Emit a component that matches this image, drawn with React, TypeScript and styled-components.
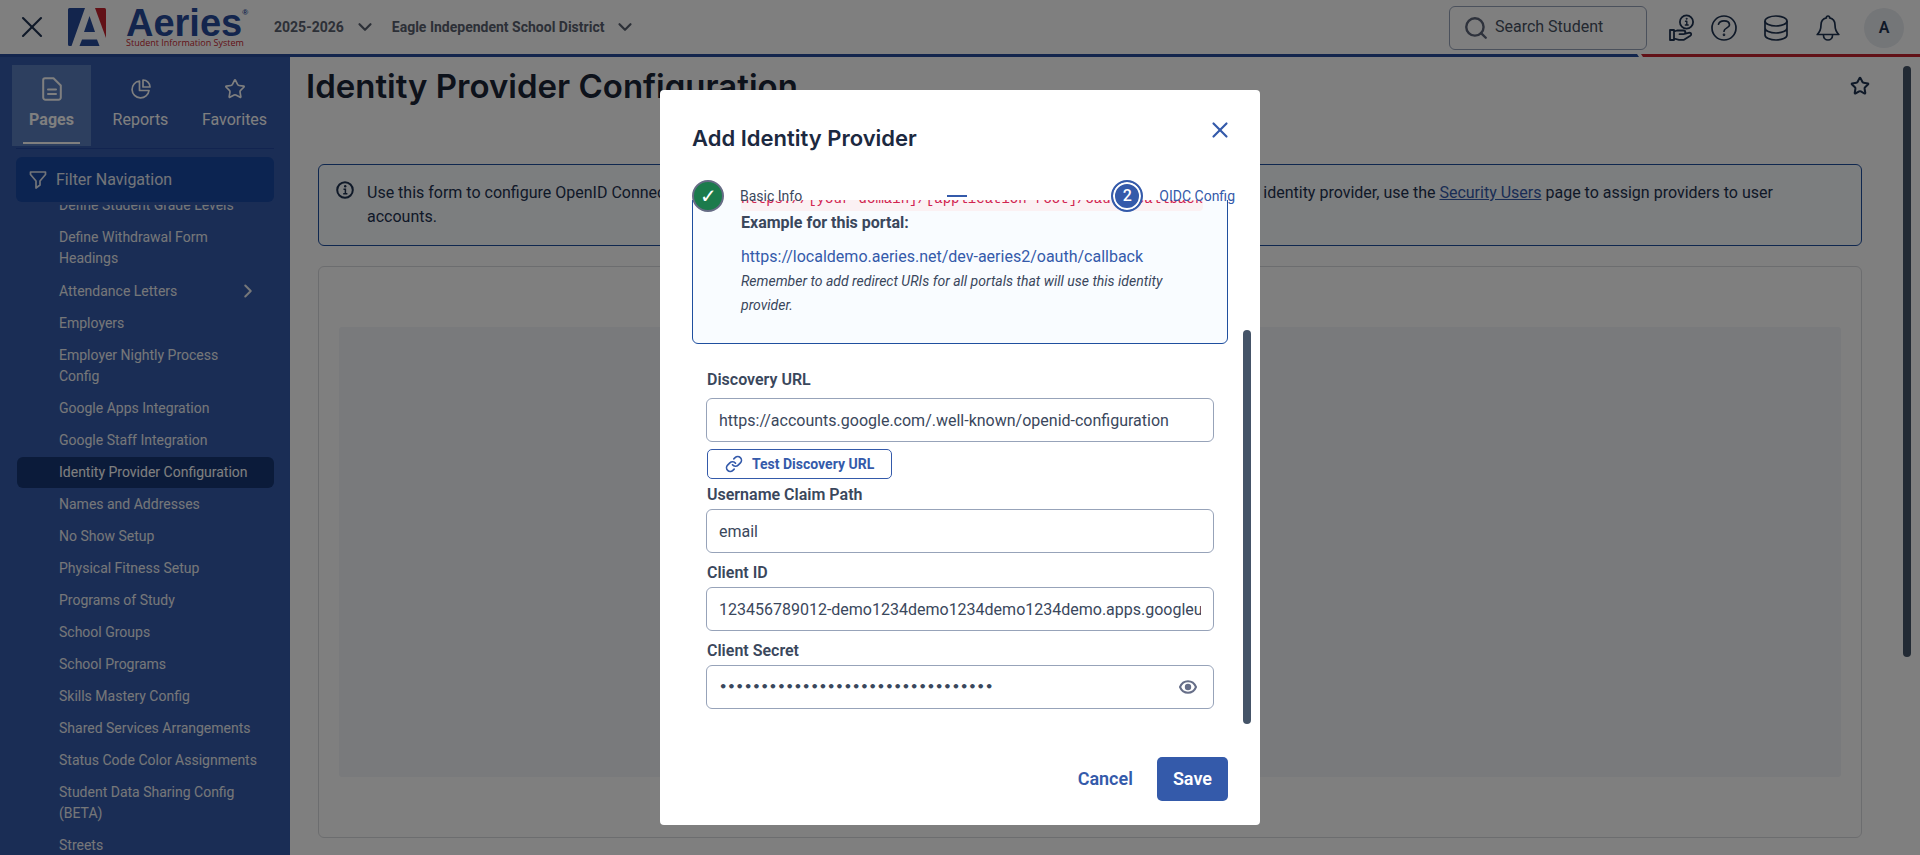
import React from "react";
import styled, { createGlobalStyle } from "styled-components";
import { ChevronDown, ChevronRight, Link as LinkIcon, Search, Star, X } from "lucide-react";

const color = {
  brand: "#345aaa",
  brandDark: "#264a9b",
  brandRed: "#c5232e",
  ink: "#1e3250",
  text: "#3a475c",
  line: "#97a3b9",
  thumb: "#455468",
  noteLine: "#1f4f9f",
  noteFill: "#f9fcff",
};

const GlobalStyle = createGlobalStyle`
  *, *::before, *::after { box-sizing: border-box; }
  body {
    margin: 0;
    background: #fff;
    color: ${color.text};
    font: 400 16px/24px Roboto, "Noto Sans", sans-serif;
    overflow: hidden;
  }
  button, input, select { font: inherit; color: inherit; }
  button { border: 0; padding: 0; background: none; cursor: pointer; }
  h1, h2, p, ul { margin: 0; padding: 0; }
  svg { display: block; flex: none; }
`;

const Shell = styled.div`
  height: 100vh;
  display: flex;
  flex-direction: column;
`;

/* ---------- top bar ---------- */

const TopBar = styled.header`
  height: 54px;
  flex: none;
  display: flex;
  align-items: center;
  padding: 0 16px 0 14px;
  color: ${color.ink};
`;

const Brand = styled.a`
  display: flex;
  align-items: center;
  gap: 20px;
  margin-left: 18px;
  text-decoration: none;
`;

const BrandText = styled.span`
  display: flex;
  flex-direction: column;
  width: 120px;
`;

const BrandName = styled.span`
  display: flex;
  color: ${color.brandDark};
  font: 700 38px/28px "Liberation Sans", sans-serif;
  padding-top: 4px;
`;

const Registered = styled.span`
  font-size: 8px;
  line-height: 8px;
`;

const BrandTag = styled.span`
  color: ${color.brandRed};
  font: 400 9px/12px "Open Sans", sans-serif;
  white-space: nowrap;
`;

const ContextButton = styled.button`
  display: flex;
  align-items: center;
  gap: 10px;
  font-size: 14px;
  font-weight: 700;
  color: #59606e;
  white-space: nowrap;
`;

const Contexts = styled.div`
  display: flex;
  gap: 16px;
  margin-left: 28px;
`;

const SearchBox = styled.label`
  display: flex;
  align-items: center;
  gap: 6px;
  width: 198px;
  height: 44px;
  margin: 2px 22px 0 auto;
  padding: 0 13px;
  border: 1px solid ${color.line};
  border-radius: 6px;
  color: #5c6478;
`;

const SearchInput = styled.input`
  width: 100%;
  min-width: 0;
  border: 0;
  outline: 0;
  padding: 0 0 2px;
  background: none;
  &::placeholder { color: #46505f; opacity: 1; }
`;

const Tools = styled.div`
  display: flex;
  align-items: center;
  padding-top: 2px;
`;

const ToolButton = styled.button<{ $gap?: number }>`
  margin-right: ${(p) => p.$gap ?? 24}px;
`;

const Avatar = styled.button`
  width: 40px;
  height: 40px;
  border-radius: 50%;
  background: #e9ecf1;
  font-weight: 600;
`;

const Ribbon = styled.div`
  display: flex;
  flex: none;
  height: 3px;
  gap: 2px;
`;

const RibbonBlue = styled.div`
  flex: 1;
  background: ${color.brandDark};
  clip-path: polygon(0 0, calc(100% - 2px) 0, 100% 100%, 0 100%);
`;

const RibbonRed = styled.div`
  width: 279px;
  background: ${color.brandRed};
  clip-path: polygon(0 0, 100% 0, 100% 100%, 2px 100%);
`;

/* ---------- side navigation ---------- */

const Columns = styled.div`
  flex: 1;
  min-height: 0;
  display: flex;
`;

const Side = styled.nav`
  width: 290px;
  flex: none;
  display: flex;
  flex-direction: column;
  padding: 8px 16px 0 12px;
  background: ${color.brand};
  color: #fff;
  overflow: hidden;
`;

const Tabs = styled.div`
  display: flex;
  gap: 5px;
  margin-right: -8px;
`;

const Tab = styled.button<{ $active?: boolean }>`
  flex: none;
  display: flex;
  flex-direction: column;
  align-items: center;
  gap: 5px;
  width: ${(p) => (p.$active ? 79 : 89)}px;
  height: 81px;
  padding: 10px 11px 0;
  background: ${(p) => (p.$active ? "#5a7fbf" : "none")};
  font-weight: ${(p) => (p.$active ? 700 : 400)};
  &::after {
    content: "";
    align-self: stretch;
    height: 2px;
    margin-top: 5px;
    background: ${(p) => (p.$active ? "#fff" : "none")};
  }
`;

const TabIcon = styled.span`
  display: grid;
  place-items: center;
  height: 28px;
`;

const Filter = styled.label`
  display: flex;
  align-items: center;
  gap: 9px;
  height: 45px;
  flex: none;
  margin: 10px 0 3px 4px;
  padding: 0 13px;
  border-radius: 6px;
  background: #1848a2;
`;

const TabRule = styled.div`
  height: 1px;
  flex: none;
  margin: 2px 0 -2px 4px;
  background: #2449a0;
`;

const FilterInput = styled.input`
  width: 100%;
  min-width: 0;
  border: 0;
  outline: 0;
  padding: 0;
  background: none;
  &::placeholder { color: #e4e9f2; opacity: 1; }
`;

const PageListFrame = styled.div`
  flex: 1;
  min-height: 0;
  overflow: hidden;
`;

const PageList = styled.ul`
  list-style: none;
  margin: -15px 0 0 5px;
`;

const PageLink = styled.a<{ $active?: boolean }>`
  display: flex;
  justify-content: space-between;
  align-items: center;
  margin-bottom: 1px;
  padding: 5px 15px 5px 42px;
  border-radius: 6px;
  background: ${(p) => (p.$active ? "#163674" : "none")};
  color: ${(p) => (p.$active ? "#fff" : "#eceef2")};
  font-size: 14px;
  line-height: 21px;
  text-decoration: none;
`;

/* ---------- main column ---------- */

const Main = styled.main`
  flex: 1;
  min-width: 0;
  display: flex;
`;

const Content = styled.div`
  flex: 1;
  min-width: 0;
  padding-right: 41px;
`;

const TitleRow = styled.div`
  display: flex;
  align-items: center;
  justify-content: space-between;
  height: 107px;
  padding: 0 0 49px 16px;
  margin-right: -8px;
`;

const PageTitle = styled.h1`
  color: #1a2536;
  font: 600 33px/40px Inter, sans-serif;
`;

const Notice = styled.div`
  display: flex;
  gap: 13px;
  margin-left: 28px;
  padding: 16px 64px 16px 17px;
  border: 1px solid ${color.noteLine};
  border-radius: 6px;
  background: ${color.noteFill};
  color: ${color.ink};
`;

const NoticeLink = styled.a`
  color: ${color.brand};
`;

const Panel = styled.section`
  height: 572px;
  margin: 20px 0 0 28px;
  padding: 60px 20px;
  border: 1px solid #d9dade;
  border-radius: 6px;
`;

const PanelBlank = styled.div`
  height: 100%;
  border-radius: 3px;
  background: #f2f4f8;
`;

const PageThumb = styled.div`
  width: 8px;
  height: 591px;
  margin: 9px 9px 0 0;
  border-radius: 4px;
  background: ${color.thumb};
`;

/* ---------- dialog ---------- */

const Backdrop = styled.div`
  position: fixed;
  inset: 0;
  display: flex;
  justify-content: center;
  align-items: flex-start;
  padding-top: 90px;
  background: rgba(0, 0, 0, 0.5);
`;

const Dialog = styled.div`
  width: 600px;
  padding: 26px 32px 24px;
  border-radius: 4px;
  background: #fff;
`;

const DialogHead = styled.div`
  display: flex;
  justify-content: space-between;
  align-items: flex-start;
  height: 64px;
  margin-right: -6px;
`;

const DialogTitle = styled.h2`
  padding-top: 8px;
  color: #1c2940;
  font: 600 22px/28px Inter, sans-serif;
`;

const CloseButton = styled.button`
  display: grid;
  place-items: center;
  width: 28px;
  height: 28px;
  color: ${color.brand};
`;

const Steps = styled.div`
  position: relative;
  z-index: 1;
  display: flex;
  justify-content: space-between;
  height: 20px;
  margin-right: -7px;
`;

const Step = styled.div<{ $current?: boolean }>`
  display: flex;
  align-items: center;
  gap: 16px;
  height: 32px;
  font-size: 14px;
  color: ${(p) => (p.$current ? color.brand : color.text)};
`;

const StepMark = styled.span<{ $current?: boolean }>`
  display: grid;
  place-items: center;
  width: 32px;
  height: 32px;
  border: 2px solid ${(p) => (p.$current ? color.brand : "#666c85")};
  border-radius: 50%;
  background: ${(p) => (p.$current ? color.brand : "#1b7b4c")};
  box-shadow: ${(p) => (p.$current ? "inset 0 0 0 2px #fff" : "none")};
  color: #fff;
  font-size: ${(p) => (p.$current ? 16 : 20)}px;
  font-weight: 500;
`;

const StepLine = styled.span`
  width: 20px;
  height: 2px;
  margin-top: 15px;
  background: ${color.brand};
`;

const Body = styled.div`
  display: flex;
  gap: 15px;
  height: 540px;
  margin-right: -23px;
  overflow: hidden;
`;

const BodyContent = styled.div`
  flex: 1;
  min-width: 0;
`;

const BodyThumb = styled.div`
  width: 8px;
  height: 394px;
  margin-top: 130px;
  border-radius: 4px;
  background: ${color.thumb};
`;

const UriNote = styled.div`
  margin-top: -38px;
  padding: 24px 32px 26px 48px;
  border: 1px solid ${color.noteLine};
  border-radius: 6px;
  background: ${color.noteFill};
`;

const UriPattern = styled.code`
  display: block;
  width: max-content;
  color: #d12450;
  background: #fbf1f3;
  border-radius: 4px;
  font: 14px/24px "Liberation Mono", monospace;
`;

const NoteTitle = styled.strong`
  display: block;
  margin-bottom: 10px;
`;

const UriLink = styled.a`
  color: ${color.brand};
  text-decoration: none;
`;

const Reminder = styled.p`
  font-size: 14px;
  font-style: italic;
`;

const Form = styled.form`
  display: flex;
  flex-direction: column;
  padding: 24px 14px 0 14px;
`;

const Label = styled.label<{ $gap?: number }>`
  margin-bottom: ${(p) => p.$gap ?? 2}px;
  padding-left: 1px;
  font-weight: 600;
`;

const Field = styled.input`
  width: 100%;
  height: 44px;
  margin-bottom: 8px;
  padding: 0 12px;
  border: 1px solid ${color.line};
  border-radius: 6px;
  background: #fff;
  outline: 0;
`;

const SecretBox = styled.div`
  display: flex;
  align-items: center;
  height: 44px;
  padding: 0 16px 0 12px;
  border: 1px solid ${color.line};
  border-radius: 6px;
  color: #666e88;
`;

const SecretInput = styled.input`
  flex: 1;
  min-width: 0;
  border: 0;
  outline: 0;
  padding: 0;
  background: none;
  color: ${color.text};
  font: 700 13px/24px "DejaVu Sans", sans-serif;
`;

const TestButton = styled.button`
  display: flex;
  align-items: center;
  align-self: flex-start;
  gap: 9px;
  height: 30px;
  margin: -1px 0 4px 1px;
  padding: 0 17px;
  border: 1px solid ${color.brand};
  border-radius: 5px;
  color: ${color.brand};
  font-size: 14px;
  font-weight: 700;
`;

const Actions = styled.div`
  display: flex;
  justify-content: flex-end;
  gap: 24px;
  padding-top: 17px;
`;

const ActionButton = styled.button<{ $primary?: boolean }>`
  height: 44px;
  padding: 0 ${(p) => (p.$primary ? 16 : 0)}px;
  border-radius: 5px;
  background: ${(p) => (p.$primary ? color.brand : "none")};
  color: ${(p) => (p.$primary ? "#fff" : color.brand)};
  font-size: 18px;
  font-weight: 600;
`;

/* ---------- drawings ---------- */

const AeriesMark = () => (
  <svg width="38" height="38" viewBox="0 0 38 38">
    <path d="M1.500 0H17L3.500 38H1.500A1.500 1.500 0 0 1 0 36.500V1.500A1.500 1.500 0 0 1 1.500 0Z" fill={color.brandDark} />
    <path d="M27 0H36.500A1.500 1.500 0 0 1 38 1.500V30Z" fill={color.brandRed} />
    <path d="M21.500 8 27 24H16Z" fill={color.brandDark} />
    <path d="M14 31.500H29L31.500 38H11.500Z" fill={color.brandDark} />
  </svg>
);

const PagesIcon = () => (
  <svg width="20" height="24" viewBox="0 0 20 24" fill="none" stroke="currentColor" strokeWidth="2" strokeLinecap="round" strokeLinejoin="round">
    <path d="M3 1.200H11.500L18.800 8.500V20.500A2.300 2.300 0 0 1 16.500 22.800H3.500A2.300 2.300 0 0 1 1.200 20.500V3A1.800 1.800 0 0 1 3 1.200Z" />
    <path d="M6 12.500H14M6 17H14" />
  </svg>
);

const ReportsIcon = () => (
  <svg width="20" height="20" viewBox="0 0 20 20" fill="none" stroke="currentColor" strokeWidth="1.700" strokeLinejoin="round">
    <path d="M8.500 2A8.500 8.500 0 1 0 18 11.500H8.500Z" />
    <path d="M12 1V8H19A7 7 0 0 0 12 1Z" />
  </svg>
);

const FunnelIcon = () => (
  <svg width="18" height="18" viewBox="0 0 18 18" fill="none" stroke="#e4e9f2" strokeWidth="1.700" strokeLinejoin="round">
    <path d="M1.500 1H16.500V3.500L11 10V14L7 17V10L1.500 3.500Z" />
  </svg>
);

const SupportIcon = () => (
  <svg width="26" height="28" viewBox="0 0 26 28" fill="none" stroke="currentColor" strokeWidth="1.800" strokeLinejoin="round" strokeLinecap="round">
    <circle cx="17.500" cy="8" r="6.600" />
    <path d="M16.500 7.200H17.800V11M16.300 11H19.200" strokeWidth="1.400" />
    <circle cx="17.500" cy="4.800" r=".5" strokeWidth="1" />
    <path d="M1 16H5V26H1ZM5 17.500 8 16.500H14.500A1.800 1.800 0 0 1 14.500 20.200H10.500M15.500 19.800 20.500 18.600C22.500 18.600 22.800 20.800 21.300 21.800L15 25.800H10L5 24.500" />
  </svg>
);

const HelpIcon = () => (
  <svg width="26" height="26" viewBox="0 0 26 26" fill="none" stroke="currentColor" strokeWidth="1.700" strokeLinecap="round">
    <circle cx="13" cy="13" r="12" />
    <path d="M7.500 9.200C8.200 6.900 10.300 5.800 13 5.800C16.200 5.800 18.500 7.400 18.500 10C18.500 12.800 13 13 13 16.200" />
    <circle cx="13" cy="19.800" r=".5" />
  </svg>
);

const DatabaseIcon = () => (
  <svg width="24" height="26" viewBox="0 0 24 26" fill="none" stroke="currentColor" strokeWidth="1.700">
    <ellipse cx="12" cy="6" rx="11" ry="5" />
    <path d="M1 6V20C1 22.800 6 25 12 25S23 22.800 23 20V6M1 13C1 15.800 6 18 12 18S23 15.800 23 13" />
  </svg>
);

const BellIcon = () => (
  <svg width="24" height="26" viewBox="0 0 24 26" fill="none" stroke="currentColor" strokeWidth="1.700" strokeLinecap="round" strokeLinejoin="round">
    <path d="M12 1A1.600 1.600 0 0 1 13.600 2.900C17.200 3.700 19 6.500 19 10C19 14.500 20 16.800 22.800 19.500H1.200C4 16.800 5 14.500 5 10C5 6.500 6.800 3.700 10.400 2.900A1.600 1.600 0 0 1 12 1Z" />
    <path d="M7.500 20.500A4.500 4.500 0 0 0 16.500 20.500" />
  </svg>
);

const InfoIcon = () => (
  <svg width="18" height="18" viewBox="0 0 18 18" fill="none" stroke="currentColor" strokeWidth="2">
    <circle cx="9" cy="9" r="7.800" />
    <path d="M7.500 8.300H9.400V12.500M7.200 12.700H11.400" strokeWidth="1.500" />
    <circle cx="9.200" cy="5.300" r="1.200" fill="currentColor" stroke="none" />
  </svg>
);

const EyeIcon = () => (
  <svg width="18" height="14" viewBox="0 0 18 14" fill="none" stroke="currentColor" strokeWidth="2">
    <path d="M1 7C2.500 3.300 5.500 1.200 9 1.200S15.500 3.300 17 7C15.500 10.700 12.500 12.800 9 12.800S2.500 10.700 1 7Z" />
    <circle cx="9" cy="7" r="3.200" fill="currentColor" stroke="none" />
  </svg>
);

const pages = [
  "Define Student Grade Levels",
  "Define Withdrawal Form Headings",
  "Attendance Letters",
  "Employers",
  "Employer Nightly Process Config",
  "Google Apps Integration",
  "Google Staff Integration",
  "Identity Provider Configuration",
  "Names and Addresses",
  "No Show Setup",
  "Physical Fitness Setup",
  "Programs of Study",
  "School Groups",
  "School Programs",
  "Skills Mastery Config",
  "Shared Services Arrangements",
  "Status Code Color Assignments",
  "Student Data Sharing Config (BETA)",
  "Streets",
];

export default function App() {
  return (
    <Shell>
      <GlobalStyle />
      <TopBar>
        <button aria-label="Close navigation"><X size={36} strokeWidth={1.4} /></button>
        <Brand href="#" aria-label="Aeries">
          <AeriesMark />
          <BrandText>
            <BrandName>Aeries<Registered>®</Registered></BrandName>
            <BrandTag>Student Information System</BrandTag>
          </BrandText>
        </Brand>
        <Contexts>
          <ContextButton>2025-2026<ChevronDown size={22} strokeWidth={2.4} /></ContextButton>
          <ContextButton>Eagle Independent School District<ChevronDown size={22} strokeWidth={2.4} /></ContextButton>
        </Contexts>
        <SearchBox>
          <Search size={26} strokeWidth={2.2} />
          <SearchInput placeholder="Search Student" aria-label="Search Student" />
        </SearchBox>
        <Tools>
          <ToolButton $gap={16} aria-label="Support"><SupportIcon /></ToolButton>
          <ToolButton $gap={27} aria-label="Help"><HelpIcon /></ToolButton>
          <ToolButton $gap={28} aria-label="Databases"><DatabaseIcon /></ToolButton>
          <ToolButton aria-label="Notifications"><BellIcon /></ToolButton>
          <Avatar>A</Avatar>
        </Tools>
      </TopBar>
      <Ribbon><RibbonBlue /><RibbonRed /></Ribbon>

      <Columns>
        <Side>
          <Tabs>
            <Tab $active><TabIcon><PagesIcon /></TabIcon>Pages</Tab>
            <Tab><TabIcon><ReportsIcon /></TabIcon>Reports</Tab>
            <Tab><TabIcon><Star size={22} strokeWidth={1.8} /></TabIcon>Favorites</Tab>
          </Tabs>
          <TabRule />
          <Filter>
            <FunnelIcon />
            <FilterInput placeholder="Filter Navigation" aria-label="Filter Navigation" />
          </Filter>
          <PageListFrame>
            <PageList>
              {pages.map((name) => (
                <li key={name}>
                  <PageLink href="#" $active={name === "Identity Provider Configuration"}>
                    {name}
                    {name === "Attendance Letters" && <ChevronRight size={22} strokeWidth={2.2} />}
                  </PageLink>
                </li>
              ))}
            </PageList>
          </PageListFrame>
        </Side>

        <Main>
          <Content>
            <TitleRow>
              <PageTitle>Identity Provider Configuration</PageTitle>
              <button aria-label="Add to favorites"><Star size={20} strokeWidth={2.4} color={color.ink} /></button>
            </TitleRow>
            <Notice>
              <InfoIcon />
              <p>
                Use this form to configure OpenID Connect (OIDC) identity providers for single sign-on to your portals. After you have saved an identity provider, use the{" "}
                <NoticeLink href="#">Security Users</NoticeLink> page to assign providers to user accounts.
              </p>
            </Notice>
            <Panel><PanelBlank /></Panel>
          </Content>
          <PageThumb />
        </Main>
      </Columns>

      <Backdrop>
        <Dialog role="dialog" aria-modal="true" aria-labelledby="dialog-title">
          <DialogHead>
            <DialogTitle id="dialog-title">Add Identity Provider</DialogTitle>
            <CloseButton aria-label="Close"><X size={26} strokeWidth={2} /></CloseButton>
          </DialogHead>
          <Steps>
            <Step><StepMark>✓</StepMark>Basic Info</Step>
            <StepLine />
            <Step $current><StepMark $current>2</StepMark>OIDC Config</Step>
          </Steps>
          <Body>
            <BodyContent>
              <UriNote>
                <UriPattern>https://[your-domain]/[application-root]/oauth/callback</UriPattern>
                <NoteTitle>Example for this portal:</NoteTitle>
                <UriLink href="#">https://localdemo.aeries.net/dev-aeries2/oauth/callback</UriLink>
                <Reminder>Remember to add redirect URIs for all portals that will use this identity provider.</Reminder>
              </UriNote>
              <Form>
                <Label htmlFor="discovery" $gap={6}>Discovery URL</Label>
                <Field id="discovery" defaultValue="https://accounts.google.com/.well-known/openid-configuration" />
                <TestButton type="button"><LinkIcon size={18} strokeWidth={2.2} />Test Discovery URL</TestButton>
                <Label htmlFor="claim">Username Claim Path</Label>
                <Field id="claim" defaultValue="email" />
                <Label htmlFor="client">Client ID</Label>
                <Field id="client" defaultValue="123456789012-demo1234demo1234demo1234demo.apps.googleusercontent.com" />
                <Label htmlFor="secret">Client Secret</Label>
                <SecretBox>
                  <SecretInput id="secret" type="password" defaultValue={"x".repeat(33)} />
                  <button type="button" aria-label="Show secret"><EyeIcon /></button>
                </SecretBox>
              </Form>
            </BodyContent>
            <BodyThumb />
          </Body>
          <Actions>
            <ActionButton>Cancel</ActionButton>
            <ActionButton $primary>Save</ActionButton>
          </Actions>
        </Dialog>
      </Backdrop>
    </Shell>
  );
}
